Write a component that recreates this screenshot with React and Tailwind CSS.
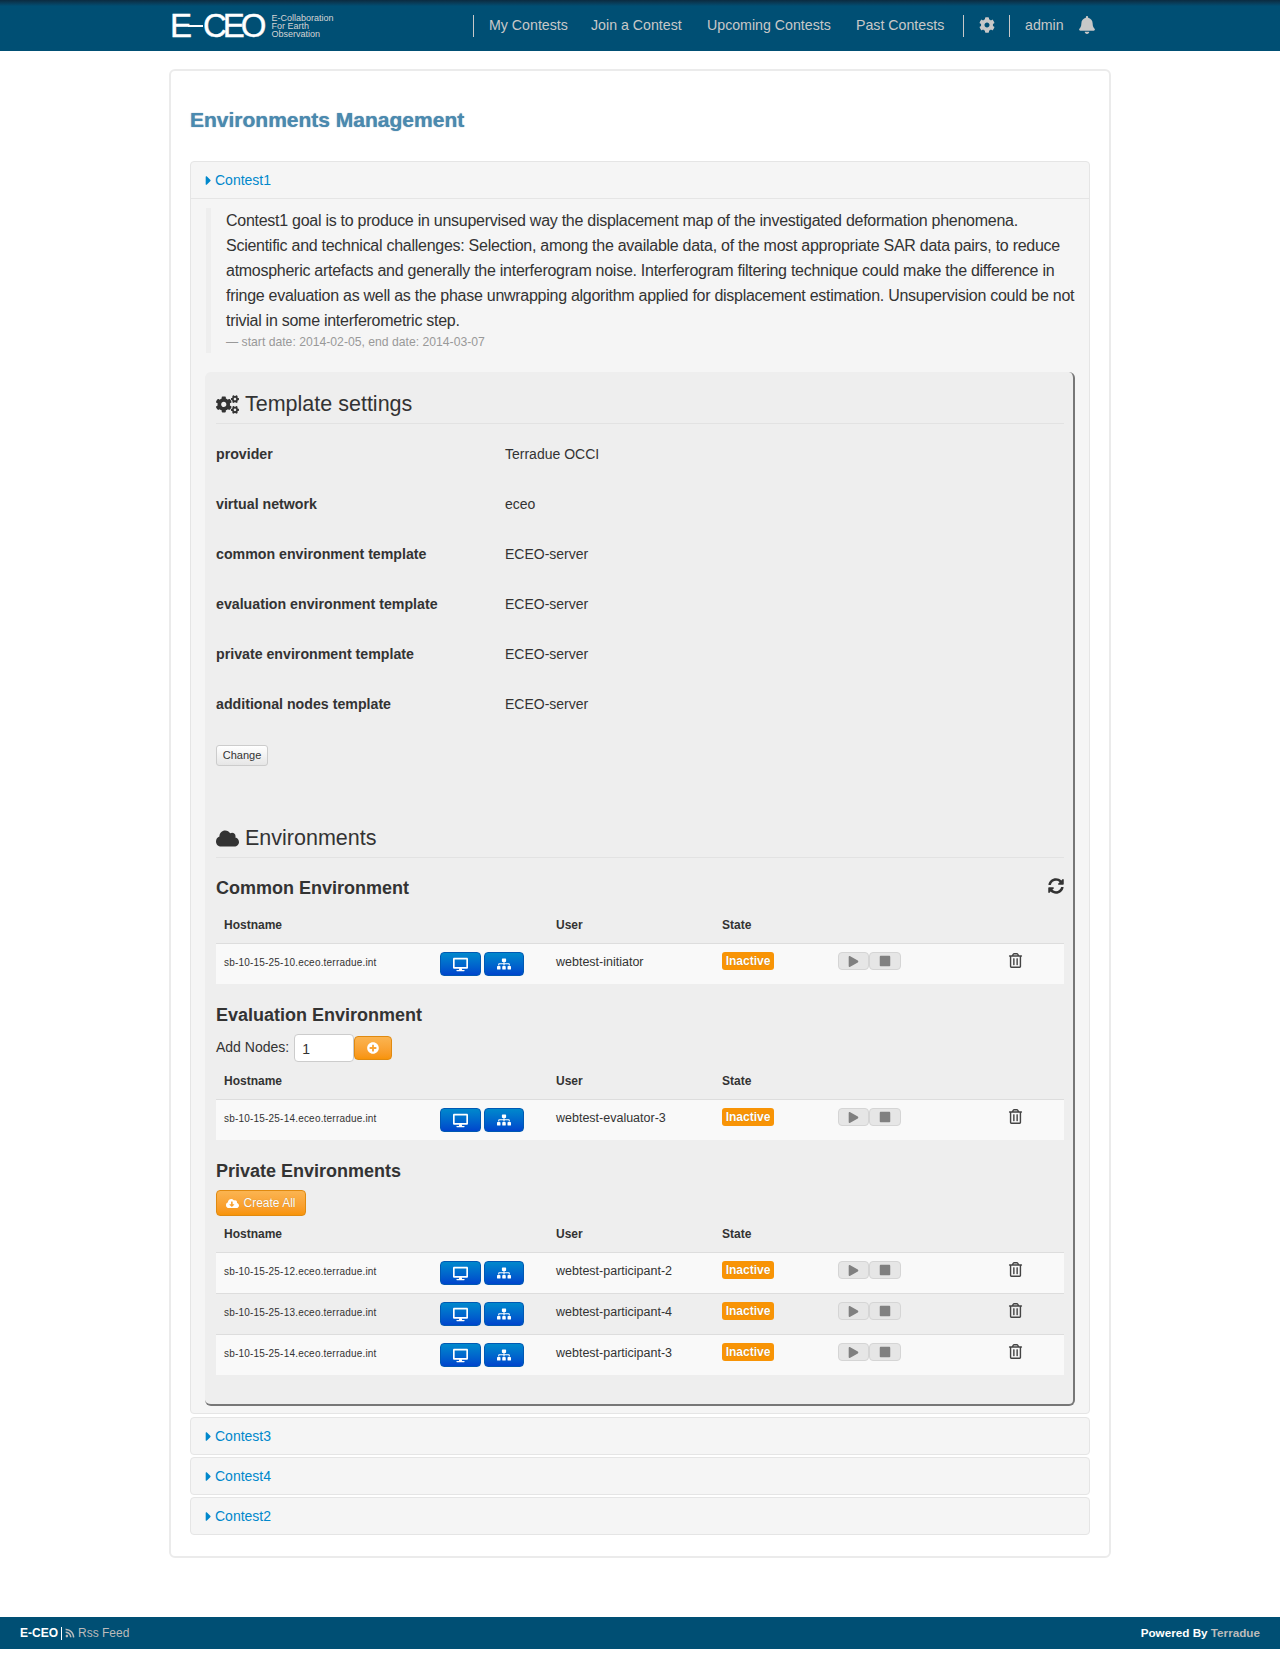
import {
  FaBell,
  FaCaretRight,
  FaCloud,
  FaCloudDownloadAlt,
  FaCog,
  FaCogs,
  FaDesktop,
  FaPlay,
  FaPlusCircle,
  FaRegTrashAlt,
  FaRss,
  FaSitemap,
  FaStop,
  FaSyncAlt,
} from "react-icons/fa";

const sans = "font-['Liberation_Sans',Arial,sans-serif]";

const settings = [
  ["provider", "Terradue OCCI"],
  ["virtual network", "eceo"],
  ["common environment template", "ECEO-server"],
  ["evaluation environment template", "ECEO-server"],
  ["private environment template", "ECEO-server"],
  ["additional nodes template", "ECEO-server"],
];

const tableCols = "grid grid-cols-[224px_108px_166px_116px_170px_1fr]";

function TableHead() {
  return (
    <div className={`${tableCols} h-[28px] items-start border-b border-[#dddddd] text-[12px] font-bold leading-[18px] text-[#333333]`}>
      <div className="pl-2">Hostname</div>
      <div />
      <div className="pl-2">User</div>
      <div className="pl-2">State</div>
      <div />
      <div />
    </div>
  );
}

function EnvRow({ host, user, striped = true, border = false }) {
  return (
    <div className={`${tableCols} items-start ${striped ? "bg-[#f9f9f9]" : "bg-[#eeeeee]"} ${border ? "h-[41px] border-t border-[#dddddd]" : "h-[40px]"}`}>
      <div className="mt-[11px] pl-2 text-[10px] leading-[16px] tracking-[0.2px] text-[#333333]">{host}</div>
      <div className="mt-[8px] flex gap-[3px]">
        <button type="button" className="flex h-[24px] w-[41px] items-center justify-center rounded-[4px] border border-[#0059b3] bg-linear-to-b from-[#0088cc] to-[#0044cc] text-white">
          <FaDesktop className="text-[15px]" />
        </button>
        <button type="button" className="flex h-[24px] w-[40px] items-center justify-center rounded-[4px] border border-[#0059b3] bg-linear-to-b from-[#0088cc] to-[#0044cc] text-white">
          <FaSitemap className="text-[14px]" />
        </button>
      </div>
      <div className="mt-[9px] pl-2 text-[12.5px] leading-[18px] text-[#333333]">{user}</div>
      <div className="mt-[8px] pl-2">
        <span className="block h-[18px] w-[52px] rounded-[3px] bg-[#f89406] text-center text-[12px] font-bold leading-[18px] text-white [text-shadow:0_0_1px_rgba(0,0,0,0.25)]">
          Inactive
        </span>
      </div>
      <div className="mt-[8px] flex pl-2">
        <span className="flex h-[18px] w-[31px] items-center justify-center rounded-[4px] border border-[#d5d5d5] bg-[#e6e6e6] text-[#808080]">
          <FaPlay className="text-[11px]" />
        </span>
        <span className="flex h-[18px] w-[32px] items-center justify-center rounded-[4px] border border-[#d5d5d5] bg-[#e6e6e6] text-[#808080]">
          <FaStop className="text-[12px]" />
        </span>
      </div>
      <div className="mt-[9px] pl-[8px] text-[#444444]">
        <FaRegTrashAlt className="text-[15px]" />
      </div>
    </div>
  );
}

function ContestHead({ name, border = false }) {
  return (
    <div className={`flex items-center pl-[10px] text-[14px] text-[#0088cc] ${border ? "h-[37px] border-b border-[#e5e5e5]" : "h-[36px]"}`}>
      <FaCaretRight className="mr-[-1px] text-[15px]" />
      {name}
    </div>
  );
}

function SectionTitle({ icon, children }) {
  return (
    <div className="flex h-[42px] items-center gap-[6px] border-b border-[#e2e2e2] pt-[3px] text-[21.5px] text-[#333333]">
      {icon}
      {children}
    </div>
  );
}

export default function App() {
  return (
    <div className={`${sans} min-h-[1653px] bg-white text-[#333333]`}>
      <header className="flex h-[51px] items-center bg-linear-to-b from-[#0b2b40] from-0% to-[#004f74] to-[12%] text-[14.2px] text-[#c8c8c8]">
        <div className="ml-[170px] flex w-[303px] items-center">
          <span className="flex items-center text-[33px] leading-none tracking-[-4px] text-white [-webkit-text-stroke:0.4px_white]">
            E<span className="h-[2px] w-[15px] bg-white" />CEO
          </span>
          <span className="ml-[9px] text-[9px] leading-[8px] text-[#d5d5d5]">
            E-Collaboration
            <br />
            For Earth
            <br />
            Observation
          </span>
        </div>
        <span className="h-[22px] w-px bg-[#c8c8c8]" />
        <nav className="ml-[15px] flex w-[474px] items-center">
          <span className="w-[102px]">My Contests</span>
          <span className="w-[116px]">Join a Contest</span>
          <span className="w-[149px]">Upcoming Contests</span>
          <span>Past Contests</span>
        </nav>
        <span className="h-[22px] w-px bg-[#c8c8c8]" />
        <FaCog className="ml-[15px] mb-[2px] text-[16px]" />
        <span className="ml-[14px] h-[22px] w-px bg-[#c8c8c8]" />
        <span className="ml-[15px]">admin</span>
        <FaBell className="ml-[14px] mb-[2px] text-[18px]" />
      </header>

      <main className="mt-[18px] ml-[169px] h-[1489px] w-[942px] rounded-[6px] border-2 border-[#ebebeb] px-[19px] pt-[37px]">
        <h1 className="text-[21px] font-bold leading-[24px] text-[#4a8ab0] [text-shadow:0_0_1px_rgba(50,90,130,0.7)]">
          Environments Management
        </h1>

        <div className="mt-[29px] rounded-[4px] border border-[#e5e5e5] bg-[#f5f5f5] pb-[7px]">
          <ContestHead name="Contest1" border />
          <div className="px-[14px] pt-[9px]">
            <blockquote className="-mr-[3px] ml-[1px] border-l-[5px] border-[#eeeeee] pb-[2px] pl-[15px]">
              <p className="text-[16px] leading-[25px] tracking-[-0.27px] text-[#333333]">
                Contest1 goal is to produce in unsupervised way the displacement map of the investigated deformation phenomena. Scientific and technical challenges: Selection, among the available data, of the most appropriate SAR data pairs, to reduce atmospheric artefacts and generally the interferogram noise. Interferogram filtering technique could make the difference in fringe evaluation as well as the phase unwrapping algorithm applied for displacement estimation. Unsupervision could be not trivial in some interferometric step.
              </p>
              <small className="block text-[12.2px] leading-[18px] text-[#999999]">
                — start date: 2014-02-05, end date: 2014-03-07
              </small>
            </blockquote>

            <section className="mt-[19px] h-[1034px] rounded-[6px] border-r-2 border-b-2 border-[#777777] bg-[#eeeeee] pt-[10px] pr-[9px] pl-[11px]">
              <SectionTitle icon={<FaCogs className="text-[23px]" />}>Template settings</SectionTitle>

              <div className="mt-[5px] text-[14px] leading-[20px]">
                {settings.map(([label, value]) => (
                  <div key={label} className="flex h-[50px] items-center">
                    <div className="w-[289px] text-[14.2px] font-bold">{label}</div>
                    <div>{value}</div>
                  </div>
                ))}
              </div>

              <button type="button" className="mt-[16px] block h-[21px] w-[52px] rounded-[3px] border border-[#cccccc] bg-linear-to-b from-white to-[#e6e6e6] text-[11px] text-[#333333]">
                Change
              </button>

              <div className="mt-[50px]">
                <SectionTitle icon={<FaCloud className="text-[23px]" />}>Environments</SectionTitle>
              </div>

              <div className="mt-[18px] flex h-[24px] items-center justify-between">
                <h4 className="text-[18px] font-bold">Common Environment</h4>
                <FaSyncAlt className="mb-[4px] text-[16px]" />
              </div>
              <div className="mt-[16px]">
                <TableHead />
                <EnvRow host="sb-10-15-25-10.eceo.terradue.int" user="webtest-initiator" />
              </div>

              <h4 className="mt-[19px] text-[18px] font-bold leading-[24px]">Evaluation Environment</h4>
              <div className="mt-[7px] flex h-[28px] items-center text-[14px]">
                <span className="mb-[2px]">Add Nodes:</span>
                <span className="ml-[5px] flex h-[28px] w-[60px] items-center rounded-[4px] border border-[#cccccc] bg-white pl-[7px] pt-[2px]">1</span>
                <span className="flex h-[24px] w-[38px] items-center justify-center rounded-[4px] border border-[#e08a10] bg-linear-to-b from-[#fbb450] to-[#f89406] text-white">
                  <FaPlusCircle className="text-[12px]" />
                </span>
              </div>
              <div className="mt-[10px]">
                <TableHead />
                <EnvRow host="sb-10-15-25-14.eceo.terradue.int" user="webtest-evaluator-3" />
              </div>

              <h4 className="mt-[19px] text-[18px] font-bold leading-[24px]">Private Environments</h4>
              <button type="button" className="mt-[7px] flex h-[26px] w-[90px] items-center justify-center gap-[4px] rounded-[4px] border border-[#e08a10] bg-linear-to-b from-[#fbb450] to-[#f89406] text-[12px] text-white [text-shadow:0_0_1px_rgba(0,0,0,0.25)]">
                <FaCloudDownloadAlt className="text-[13px]" />
                Create All
              </button>
              <div className="mt-[9px]">
                <TableHead />
                <EnvRow host="sb-10-15-25-12.eceo.terradue.int" user="webtest-participant-2" />
                <EnvRow host="sb-10-15-25-13.eceo.terradue.int" user="webtest-participant-4" striped={false} border />
                <EnvRow host="sb-10-15-25-14.eceo.terradue.int" user="webtest-participant-3" border />
              </div>
            </section>
          </div>
        </div>

        <div className="mt-[3px] flex flex-col gap-[2px]">
          {["Contest3", "Contest4", "Contest2"].map((name) => (
            <div key={name} className="rounded-[4px] border border-[#e5e5e5] bg-[#f5f5f5]">
              <ContestHead name={name} />
            </div>
          ))}
        </div>
      </main>

      <footer className="mt-[59px] flex h-[32px] items-center justify-between bg-[#004f74] px-[20px] text-[12px] text-[#bbbbbb]">
        <div className="flex items-center">
          <span className="font-bold text-white">E-CEO</span>
          <span className="mx-[3px] h-[13px] w-px bg-white" />
          <FaRss className="mr-[3px] text-[10px]" />
          Rss Feed
        </div>
        <div className="text-[11.7px] font-bold text-white">
          Powered By <span className="text-[#bbbbbb]">Terradue</span>
        </div>
      </footer>
    </div>
  );
}
